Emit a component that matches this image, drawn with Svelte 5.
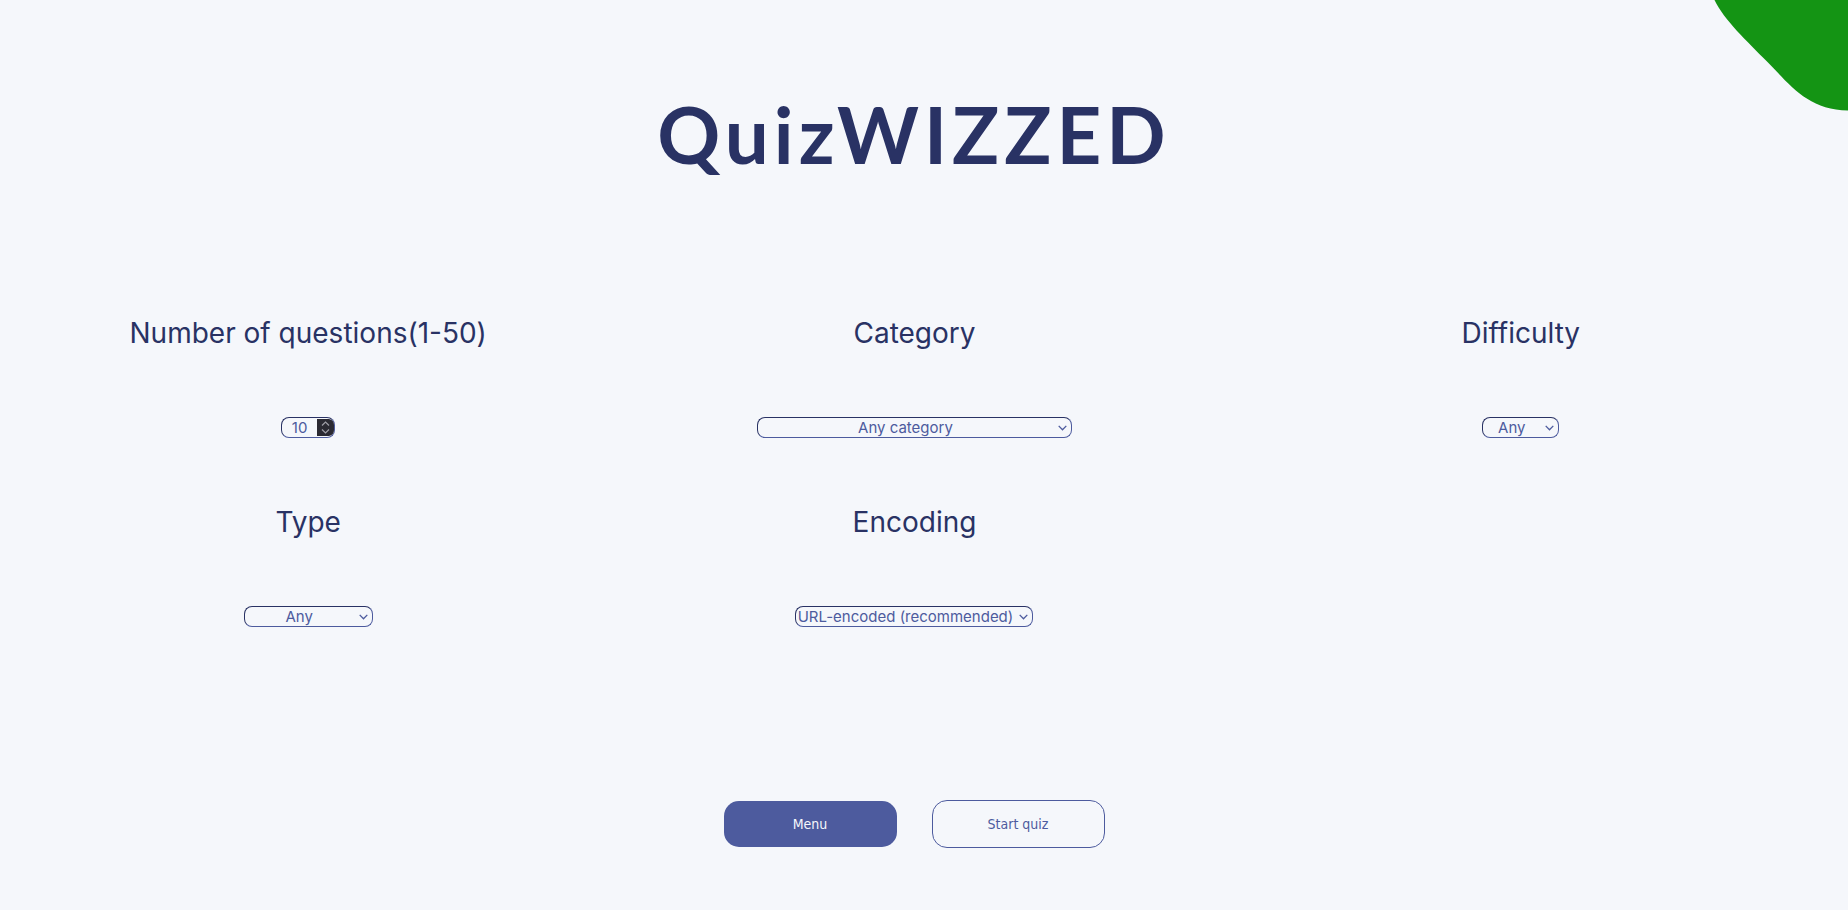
<script>
  const fields = [
    {
      id: 'amount',
      label: 'Number of questions(1-50)',
      kind: 'number'
    },
    {
      id: 'category',
      label: 'Category',
      width: 315,
      options: ['Any category']
    },
    {
      id: 'difficulty',
      label: 'Difficulty',
      width: 77,
      options: ['Any']
    },
    {
      id: 'type',
      label: 'Type',
      width: 129,
      options: ['Any']
    },
    {
      id: 'encoding',
      label: 'Encoding',
      width: 238,
      options: ['URL-encoded (recommended)']
    }
  ];
  let amount = $state(10);
</script>

<div class="page">
  <svg class="blob" width="134" height="111" viewBox="0 0 134 111" aria-hidden="true">
    <path d="M0.500 0C10 20 33 41 53.500 62C76 85 94 110 134 110.500V0Z" fill="#149414" />
  </svg>

  <h1>QuizWIZZED</h1>

  <form onsubmit={(e) => e.preventDefault()}>
    <div class="fields">
      {#each fields as field (field.id)}
        <div class="field">
          <label for={field.id}>{field.label}</label>
          {#if field.kind === 'number'}
            <div class="control number">
              <input id={field.id} type="number" min="1" max="50" bind:value={amount} />
              <svg class="spinner" width="17" height="17" viewBox="0 0 17 17" aria-hidden="true">
                <path d="M0 0H12Q17 1 17 6V11Q17 16 12 17H0Z" fill="#2b2a33" />
                <path d="M5 6.500L8.500 3L12 6.500M5 10.500L8.500 14L12 10.500" fill="none" stroke="#a09fa8" stroke-width="1.200" />
              </svg>
            </div>
          {:else}
            <div class="control" style="width: {field.width}px">
              <select id={field.id}>
                {#each field.options as option}
                  <option>{option}</option>
                {/each}
              </select>
              <svg class="chevron" width="9" height="6" viewBox="0 0 9 6" aria-hidden="true">
                <path d="M0.700 0.900L4.500 4.800L8.300 0.900" fill="none" stroke="#4d5b9e" stroke-width="1.300" />
              </svg>
            </div>
          {/if}
        </div>
      {/each}
    </div>

    <div class="actions">
      <button type="button" class="menu">Menu</button>
      <button type="submit" class="start">Start quiz</button>
    </div>
  </form>
</div>

<style>
  :global(body) {
    margin: 0;
    background: #f5f7fb;
  }
  .page {
    position: relative;
    box-sizing: border-box;
    min-height: 100vh;
    padding: 82px 24px 62px 4px;
    font-family: Inter, sans-serif;
    color: #293264;
  }
  .blob {
    position: absolute;
    top: 0;
    right: 0;
  }
  h1 {
    margin: 0;
    font: 700 78px/104px Lato, sans-serif;
    letter-spacing: 5px;
    text-align: center;
  }
  .fields {
    display: grid;
    grid-template-columns: repeat(3, 1fr);
    row-gap: 64px;
    padding: 127px 0 0 1px;
  }
  .field {
    display: flex;
    flex-direction: column;
    align-items: center;
    gap: 64px;
  }
  label {
    font-size: 28px;
    line-height: 40px;
  }
  .control {
    display: grid;
    align-items: center;
    max-width: 100%;
  }
  .control > * {
    grid-area: 1 / 1;
  }
  .number {
    width: 54px;
  }
  select,
  input {
    box-sizing: border-box;
    width: 100%;
    height: 21px;
    margin: 0;
    border: 1px solid #4d5b9e;
    border-top-color: #293264;
    border-left-color: #293264;
    border-radius: 8px;
    background: transparent;
    color: #4d5b9e;
    font: 15px/19px Inter, sans-serif;
    text-align: center;
    appearance: none;
  }
  select {
    padding: 0 18px 0 0;
  }
  input {
    padding: 0 17px 0 0;
    appearance: textfield;
  }
  input::-webkit-inner-spin-button,
  input::-webkit-outer-spin-button {
    appearance: none;
    margin: 0;
  }
  .chevron,
  .spinner {
    justify-self: end;
    pointer-events: none;
  }
  .chevron {
    margin-right: 5px;
  }
  .spinner {
    margin-right: 1px;
  }
  .actions {
    display: flex;
    justify-content: center;
    align-items: center;
    gap: 35px;
    margin-top: 173px;
  }
  button {
    box-sizing: border-box;
    width: 173px;
    padding: 0;
    border-radius: 15px;
    font: 14px/20px "DejaVu Sans Condensed", "DejaVu Sans", sans-serif;
  }
  .menu {
    height: 46px;
    border: 0;
    background: #4d5b9e;
    color: #f5f7fb;
  }
  .start {
    height: 48px;
    border: 1px solid #4d5b9e;
    background: transparent;
    color: #4d5b9e;
  }
</style>
